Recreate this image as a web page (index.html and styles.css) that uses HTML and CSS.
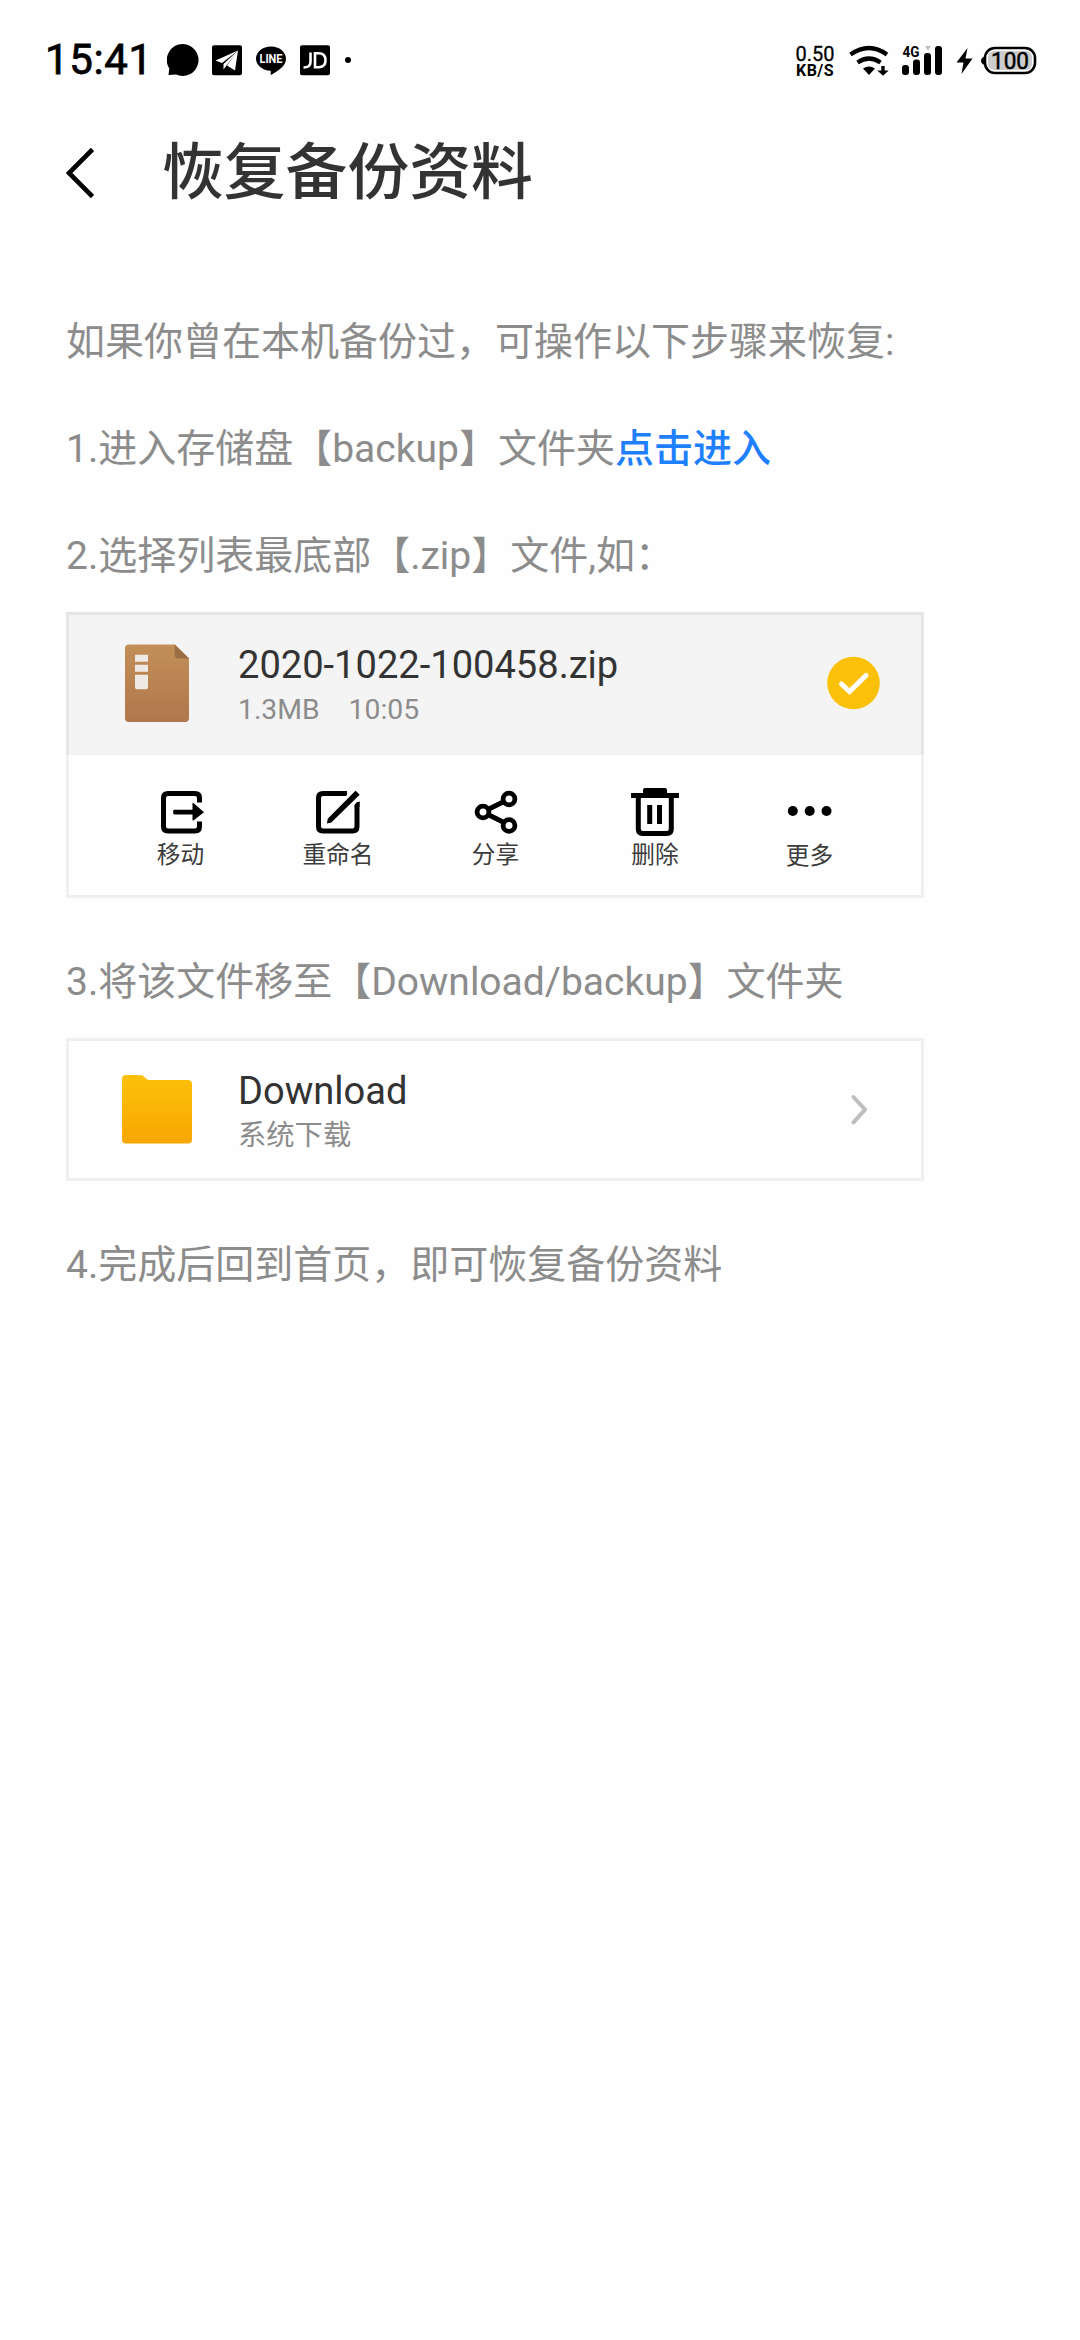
FILE: index.html
```html
<!DOCTYPE html>
<html lang="zh-CN">
<head>
<meta charset="utf-8">
<title>恢复备份资料</title>
<link rel="stylesheet" href="styles.css">
</head>
<body>
<header class="status">
  <span class="clock">15:41</span>
  <svg class="notices" width="184" height="36" viewBox="167 42 184 36">
    <path d="M183 44a16 16 0 1 1-7 30.600l-7.500 .4 .8-6.500A16 16 0 0 1 183 44z"/>
    <rect x="212" y="45.300" width="30" height="30" rx="2"/>
    <path d="M238 50.500L215.500 60.500l6.500 2.500zM238 50.500L223.500 64l0 5.500 3-4zM238 50.500L227 65.500l8 5z" fill="#fff"/>
    <path d="M271 46.500c8.300 0 15 5.500 15 12.200 0 3-1.300 5.600-3.500 8-3.300 3.400-8.500 6.800-11.700 8.300-.5-.4.500-3-.3-4.200-8-.4-14.500-5.600-14.500-12.100 0-6.700 6.700-12.200 15-12.200z"/>
    <text class="line-word" x="271" y="63.200" text-anchor="middle" textLength="23" lengthAdjust="spacingAndGlyphs">LINE</text>
    <rect x="300" y="45.300" width="30" height="30" rx="2"/>
    <path d="M310.500 52.500v9.500q0 5.500-7 5.500M315 53.300h3.500q7 0 7 7t-7 7h-3.500z" fill="none" stroke="#fff" stroke-width="2.600"/>
    <circle cx="348" cy="60" r="3"/>
  </svg>
  <div class="speed"><span class="rate">0.50</span><span class="unit">KB/S</span></div>
  <svg class="wifi" width="40" height="32" viewBox="848 44 40 32">
    <path d="M849.500 54.500Q868 41.500 886 54.500M856.500 62.500Q868 54.500 879.500 62.500" fill="none" stroke="#000" stroke-width="4.200"/>
    <path d="M862 68.500q6-4 12 0l-6 6.500z"/>
    <path d="M880.300 66h3.400v4.500h4L882 75.800l-5.700-5.300h4z"/>
  </svg>
  <svg class="signal" width="42" height="32" viewBox="900 44 42 32">
    <text class="net-type" x="901.500" y="57" textLength="17" lengthAdjust="spacingAndGlyphs">4G</text>
    <rect x="901" y="65" width="7" height="10" rx="3"/>
    <rect x="912" y="59.500" width="7" height="15.500" rx="3"/>
    <rect x="923" y="53" width="7" height="22" rx="3"/>
    <rect x="934" y="46" width="7" height="29" rx="3"/>
    <path d="M924 46h6l-3 4.500z" fill="#bbb"/>
  </svg>
  <svg class="bolt" width="17" height="28" viewBox="955 46 17 28">
    <path d="M966.500 48L955.500 62.500h7L960.500 74 971.500 58.500h-7z"/>
  </svg>
  <svg class="battery" width="56" height="30" viewBox="980 45 56 30">
    <path d="M983.500 56.500v8.500q-3.500-1.300-3.500-4.200t3.500-4.300z"/>
    <rect x="984" y="48" width="50" height="25" rx="10" fill="#fff" stroke="#000" stroke-width="2.600"/>
    <rect x="987" y="51" width="44" height="19" rx="6" fill="#ccc"/>
    <text class="level" x="1009" y="69" text-anchor="middle" textLength="38" lengthAdjust="spacingAndGlyphs">100</text>
  </svg>
</header>

<div class="titlebar">
  <svg class="back" width="28" height="52" viewBox="66 147 28 52">
    <path d="M92.500 149.500L69 173l23.500 23.500" fill="none" stroke="#000" stroke-width="4.600"/>
  </svg>
  <h1 class="title">恢复备份资料</h1>
</div>

<main class="guide">
  <p class="step">如果你曾在本机备份过，可操作以下步骤来恢复:</p>
  <p class="step">1.进入存储盘【backup】文件夹<a class="link">点击进入</a></p>
  <p class="step">2.选择列表最底部【.zip】文件,如：</p>

  <section class="card">
    <div class="entry selected">
      <svg class="icon" width="66" height="80" viewBox="124 643.500 66 80">
        <defs><linearGradient id="zip" x2="0" y2="1"><stop stop-color="#c28f58"/><stop offset="1" stop-color="#b0774c"/></linearGradient></defs>
        <path d="M129 645h46l14 14v59.500q0 4-4 4h-56q-4 0-4-4V649q0-4 4-4z" fill="url(#zip)"/>
        <path d="M174.700 645v10q0 4 4 4H189z" fill="#9a6e45"/>
        <path d="M135 655.300h13v7h-13zM135 665.300h13v7h-13zM135 675.300h13v12.500q0 2-2 2h-9q-2 0-2-2z" fill="#eee9e5"/>
      </svg>
      <div class="info">
        <div class="name">2020-1022-100458.zip</div>
        <div class="meta"><span>1.3MB</span><span>10:05</span></div>
      </div>
      <svg class="check" width="54" height="54" viewBox="825 656 54 54">
        <circle cx="852.500" cy="683" r="26.300" fill="#fbc108"/>
        <path d="M840.500 684l8 7.500L865 675.500" fill="none" stroke="#fff" stroke-width="5" stroke-linecap="round"/>
      </svg>
    </div>
    <div class="actions">
      <div class="action">
        <svg width="50" height="50" viewBox="156 787 50 50">
          <path d="M199.500 802.500V798q0-4.500-4.500-4.500h-27q-4.500 0-4.500 4.500v28.500q0 4.500 4.500 4.500h27q4.500 0 4.500-4.500v-5" fill="none" stroke="#000" stroke-width="5"/>
          <path d="M174.500 809.700h18v-6q0-1.500 1.200-.5l10.300 9-10.300 8q-1.200 1-1.200-.5v-5.300h-18q-1.300 0-1.300-1.300V811q0-1.300 1.300-1.300z"/>
        </svg>
        <span>移动</span>
      </div>
      <div class="action">
        <svg width="50" height="50" viewBox="313 787 50 50">
          <path d="M347 793.500h-24q-4.500 0-4.500 4.500v28.500q0 4.500 4.500 4.500h29.500q4.500 0 4.500-4.500V802" fill="none" stroke="#000" stroke-width="5"/>
          <path d="M344.500 797.500l9-9.500h8v9l-8 9z" fill="#fff"/>
          <path d="M355.500 791.500l3.300 3.300L331 822l-3.300.7.600-3.700z" stroke="#000" stroke-width="1.200"/>
          <path d="M359.500 801v6h-5v-1z"/>
        </svg>
        <span>重命名</span>
      </div>
      <div class="action">
        <svg width="50" height="50" viewBox="470 787 50 50">
          <path d="M482 812l26-13M482 812l26 13" stroke="#000" stroke-width="5"/>
          <g fill="#fff" stroke="#000" stroke-width="4.800"><circle cx="482" cy="812" r="5.900"/><circle cx="508" cy="799" r="5.900"/><circle cx="508" cy="825.500" r="5.900"/></g>
        </svg>
        <span>分享</span>
      </div>
      <div class="action">
        <svg width="50" height="50" viewBox="630 787 50 50">
          <path d="M631 793h12v-3q0-2 2-2h20q2 0 2 2v3h12v5h-48z"/>
          <path d="M638.300 797v32q0 4.500 4.500 4.500h24q4.500 0 4.500-4.500v-32" fill="none" stroke="#000" stroke-width="5"/>
          <path d="M649.700 805v19M659.500 805v19" stroke="#000" stroke-width="5"/>
        </svg>
        <span>删除</span>
      </div>
      <div class="action more">
        <svg width="50" height="50" viewBox="785 787 50 50">
          <circle cx="792.800" cy="811" r="5"/><circle cx="809.700" cy="811" r="5"/><circle cx="826.500" cy="811" r="5"/>
        </svg>
        <span>更多</span>
      </div>
    </div>
  </section>

  <p class="step">3.将该文件移至【Download/backup】文件夹</p>

  <section class="card">
    <div class="entry">
      <svg class="icon folder" width="72" height="70" viewBox="121 1074 72 70">
        <defs><linearGradient id="dir" x2="0" y2="1"><stop stop-color="#fbc10a"/><stop offset="1" stop-color="#f8a602"/></linearGradient></defs>
        <path d="M126 1075h14q2 0 3.500 1.300l3 2.700q1.300 1 3 1h38.500q4 0 4 4v55.500q0 4-4 4h-62q-4 0-4-4V1079q0-4 4-4z" fill="url(#dir)"/>
      </svg>
      <div class="info">
        <div class="name">Download</div>
        <div class="meta">系统下载</div>
      </div>
      <svg class="chevron" width="20" height="32" viewBox="848 1093 20 32">
        <path d="M852.500 1097l11.500 12.700-11.500 12.700" fill="none" stroke="#bfbfbf" stroke-width="4" stroke-linecap="round" stroke-linejoin="round"/>
      </svg>
    </div>
  </section>

  <p class="step">4.完成后回到首页，即可恢复备份资料</p>
</main>
</body>
</html>
```
FILE: styles.css
```css
* { box-sizing: border-box; }
body {
  margin: 0;
  width: 1080px;
  min-height: 2340px;
  background: #fefefe;
  color: #333;
  font-family: Roboto, "Noto Sans CJK SC", sans-serif;
}
svg { display: block; flex: none; }

.status {
  display: flex;
  align-items: center;
  height: 120px;
  padding-left: 45px;
  color: #000;
}
.clock {
  width: 122px;
  font-size: 42px;
  line-height: 50px;
  letter-spacing: .6px;
  -webkit-text-stroke: .8px #000;
}
.line-word { font: 700 12.5px Roboto, sans-serif; fill: #fff; }
.speed {
  display: flex;
  flex-direction: column;
  align-items: center;
  width: 40px;
  margin: 3px 0 0 444px;
}
.rate { font-size: 20px; line-height: 17px; -webkit-text-stroke: .3px #000; }
.unit { font-size: 16px; font-weight: 700; line-height: 15px; letter-spacing: .4px; }
.wifi { margin-left: 14px; }
.signal { margin-left: 12px; }
.net-type { font: 700 15.5px Roboto, sans-serif; }
.bolt { margin-left: 13px; }
.battery { margin-left: 8px; }
.level { font: 400 24px Roboto, sans-serif; stroke: #000; stroke-width: .5px; }

.titlebar {
  display: flex;
  align-items: center;
  height: 106px;
  padding-left: 66px;
}
.title {
  margin: 0 0 0 68px;
  font-size: 61.8px;
  font-weight: 500;
  line-height: 90px;
}

.guide { padding: 88px 66px 0; }
.step {
  margin: 0;
  padding-bottom: 50px;
  font-size: 39px;
  line-height: 57px;
  color: #8c8c8c;
  white-space: nowrap;
}
.step:has(+ .card) { padding-bottom: 27px; }
.link { color: #1f80ff; font-weight: 500; }

.card {
  width: 858px;
  margin-bottom: 56px;
  border: 3px solid #f0f0f0;
}
.entry {
  display: flex;
  align-items: center;
  height: 137px;
  padding: 0 41px 2px 55px;
}
.entry.selected {
  height: 143px;
  margin: -3px -3px 0;
  background: #f4f4f4;
  border: 3px solid #e6e6e6;
  border-bottom: 1px solid #eee;
  padding-bottom: 4px;
}
.folder { margin-left: -3px; }
.info { flex: 1; margin: 7px 0 0 48px; }
.folder + .info { margin-left: 45px; }
.name { font-size: 38.1px; line-height: 48px; }
.meta {
  display: flex;
  gap: 29px;
  font-size: 28.3px;
  line-height: 42px;
  color: #8c8c8c;
}
.chevron { margin-right: 11px; }

.actions {
  display: grid;
  grid-template-columns: 158px 157px 158px 161px 148px;
  height: 140px;
  padding: 32px 0 0 32.5px;
}
.action {
  display: flex;
  flex-direction: column;
  align-items: center;
  font-size: 23.7px;
  line-height: 36px;
  color: #3c3c3c;
}
.more span { padding-top: 1px; }
```
